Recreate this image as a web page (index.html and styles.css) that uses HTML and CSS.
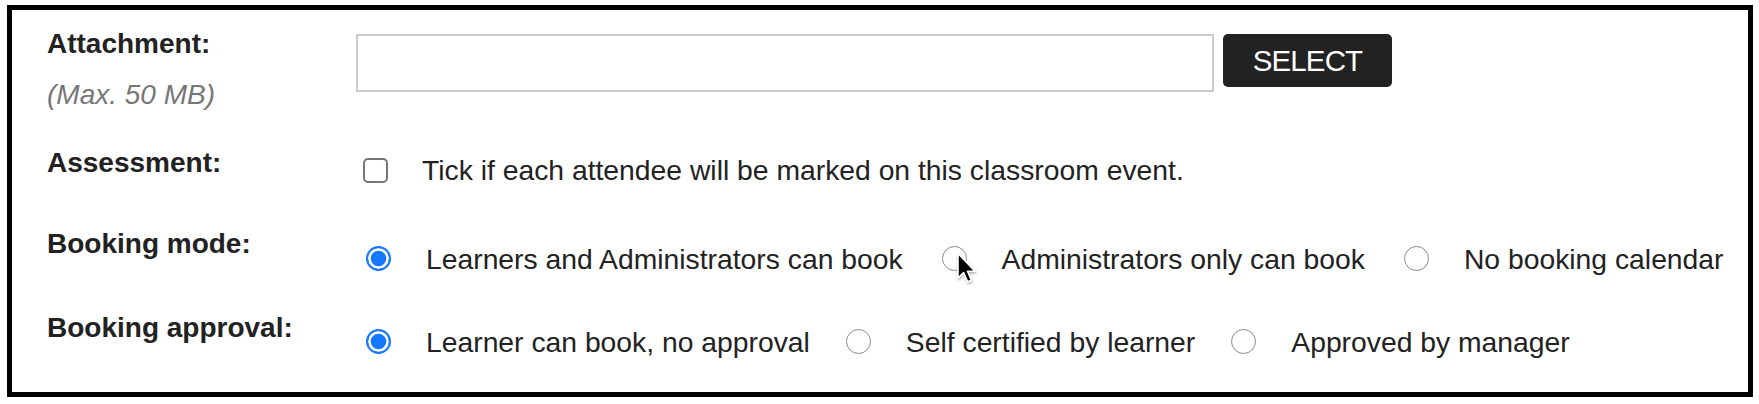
FILE: index.html
```html
<!DOCTYPE html>
<html lang="en">
<head>
<meta charset="utf-8">
<title>Classroom event settings</title>
<link rel="stylesheet" href="styles.css">
</head>
<body>
<div class="panel">
  <div class="row row-attach">
    <div class="label">
      <div class="label-title">Attachment:</div>
      <div class="label-note">(Max. 50 MB)</div>
    </div>
    <div class="controls controls-attach">
      <input class="file-input" type="text" aria-label="Attachment">
      <button class="select-btn" type="button">SELECT</button>
    </div>
  </div>

  <div class="row row-check">
    <div class="label"><div class="label-title">Assessment:</div></div>
    <div class="controls controls-check">
      <label class="option">
        <input type="checkbox" class="check">
        <span class="option-text">Tick if each attendee will be marked on this classroom event.</span>
      </label>
    </div>
  </div>

  <div class="row">
    <div class="label"><div class="label-title">Booking mode:</div></div>
    <div class="controls controls-radio">
      <label class="option"><input type="radio" name="mode" class="radio" checked><span class="option-text">Learners and Administrators can book</span></label>
      <label class="option"><input type="radio" name="mode" class="radio"><span class="option-text">Administrators only can book</span></label>
      <label class="option"><input type="radio" name="mode" class="radio"><span class="option-text">No booking calendar</span></label>
    </div>
  </div>

  <div class="row">
    <div class="label"><div class="label-title">Booking approval:</div></div>
    <div class="controls controls-radio controls-tight">
      <label class="option"><input type="radio" name="approval" class="radio" checked><span class="option-text">Learner can book, no approval</span></label>
      <label class="option"><input type="radio" name="approval" class="radio"><span class="option-text">Self certified by learner</span></label>
      <label class="option"><input type="radio" name="approval" class="radio"><span class="option-text">Approved by manager</span></label>
    </div>
  </div>
</div>

<svg class="cursor" width="24" height="34" viewBox="0 0 24 34" aria-hidden="true">
  <defs>
    <filter id="sh" x="-30%" y="-30%" width="160%" height="160%">
      <feDropShadow dx="0.5" dy="1.5" stdDeviation="1.2" flood-color="#000" flood-opacity="0.35"/>
    </filter>
  </defs>
  <path d="M2 1.5 L2 26 L7.6 20.6 L11.6 29.8 L15.4 28.2 L11.5 19.2 L19 19.2 Z" fill="#000" stroke="#fff" stroke-width="1.6" stroke-linejoin="round" filter="url(#sh)"/>
</svg>
</body>
</html>
```

FILE: styles.css
```css
html, body {
  margin: 0;
  padding: 0;
  background: #fff;
}

body {
  position: relative;
  font-family: "Liberation Sans", Arial, Helvetica, sans-serif;
  color: #222;
}

.panel {
  box-sizing: border-box;
  width: 1746px;
  height: 392px;
  margin: 5px 0 0 7px;
  border: 5px solid #000;
  padding: 18px 0 0 35px;
}

.row {
  display: flex;
  align-items: flex-start;
  margin-bottom: 37px;
}

.row-attach {
  margin-bottom: 36px;
}

.row-check {
  margin-bottom: 41.5px;
}

.label {
  width: 309px;
  flex: none;
}

.label-title {
  font-size: 28px;
  font-weight: bold;
  line-height: 32px;
  color: #222;
}

.label-note {
  margin-top: 19px;
  font-size: 28px;
  font-style: italic;
  line-height: 32px;
  color: #777;
}

.controls {
  display: flex;
  align-items: flex-start;
}

.controls-attach {
  padding-top: 6px;
}

.file-input {
  box-sizing: border-box;
  width: 858px;
  height: 58px;
  margin: 0;
  border: 2px solid #cbcbcb;
  border-radius: 0;
  background: #fff;
  outline: none;
}

.select-btn {
  box-sizing: border-box;
  width: 169px;
  height: 53px;
  margin: 0 0 0 9px;
  padding: 0;
  border: none;
  border-radius: 5px;
  background: #222;
  color: #fff;
  font-family: "Liberation Sans", Arial, sans-serif;
  font-size: 29.5px;
  letter-spacing: -0.9px;
  line-height: 53px;
}

.controls-check {
  padding-top: 7px;
  padding-left: 7px;
}

.controls-radio {
  padding-top: 15px;
  padding-left: 10px;
  gap: 39px;
}

.controls-tight {
  padding-top: 14px;
  gap: 36px;
}

.option {
  display: flex;
  align-items: center;
  height: 32px;
}

.option-text {
  font-size: 28.3px;
  line-height: 32px;
  color: #222;
  white-space: nowrap;
}

.check {
  appearance: none;
  -webkit-appearance: none;
  box-sizing: border-box;
  width: 25px;
  height: 25px;
  margin: 0 34px 0 0;
  border: 2px solid #767676;
  border-radius: 5px;
  background: #fff;
  flex: none;
}

.radio {
  appearance: none;
  -webkit-appearance: none;
  box-sizing: border-box;
  width: 25px;
  height: 25px;
  margin: 0 35px 0 0;
  border: 1.5px solid #8a8a8a;
  border-radius: 50%;
  background: #fff;
  flex: none;
}

.radio:checked {
  border: 2.5px solid #1579ff;
  background: #1579ff;
  box-shadow: inset 0 0 0 2.7px #fff;
}

.cursor {
  position: absolute;
  left: 956px;
  top: 252px;
}
```
